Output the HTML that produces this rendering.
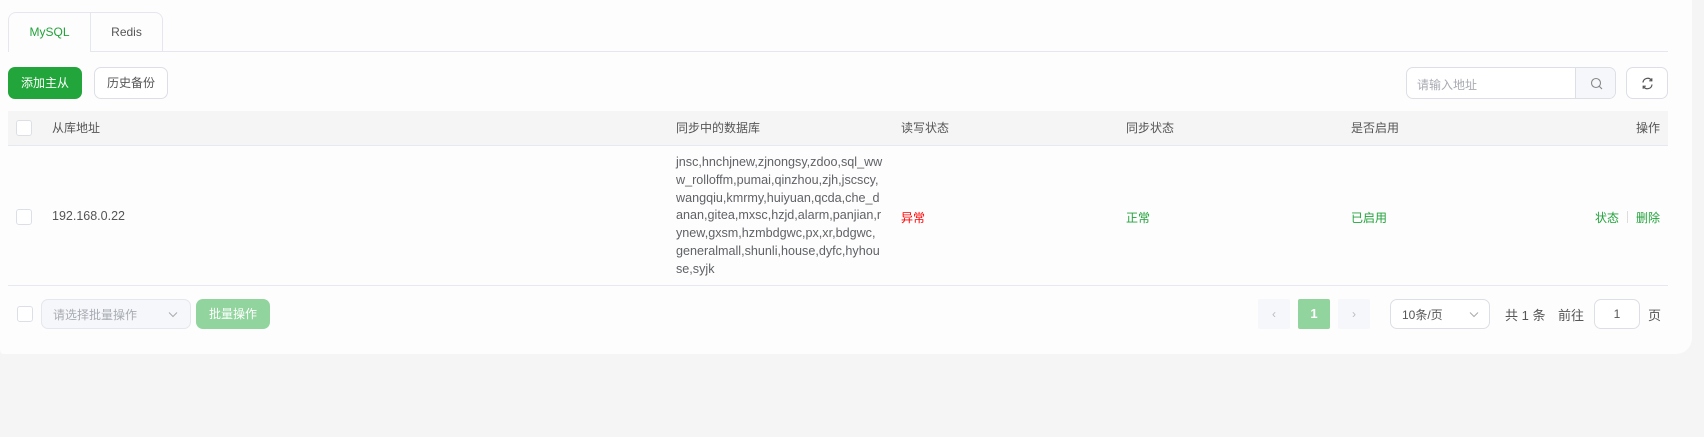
<!DOCTYPE html>
<html><head><meta charset="utf-8"><style>
*{box-sizing:border-box;margin:0;padding:0}
body{width:1704px;height:437px;background:#f5f5f6;font-family:"Liberation Sans","Noto Sans CJK SC",sans-serif;font-size:12px;color:#606266;position:relative;overflow:hidden}
.card{position:absolute;left:0;top:0;width:1692px;height:354px;background:#fdfdfd;border-bottom-right-radius:16px;border-bottom-left-radius:4px}
.a{position:absolute}
.tab{position:absolute;top:12px;height:40px;border:1px solid #e4e7ed;border-bottom:none;line-height:38px;text-align:center;font-size:12px}
.btn{position:absolute;height:32px;border-radius:7px;line-height:30px;text-align:center;font-size:12px}
.cb{position:absolute;width:16px;height:16px;border:1px solid #dcdfe6;border-radius:3px;background:#fff}
.th{position:absolute;top:111px;line-height:35px;font-size:12px;color:#555}
</style></head><body>
<div class="card">
<div class="tab" style="left:8px;width:83px;border-top-left-radius:8px;color:#22a33b">MySQL</div>
<div class="tab" style="left:90px;width:73px;border-top-right-radius:8px;color:#555">Redis</div>
<div class="a" style="left:8px;top:51px;width:1660px;height:1px;background:#e4e7ed"></div>
<div class="a" style="left:9px;top:51px;width:81px;height:1px;background:#fdfdfd"></div>

<div class="btn" style="left:8px;top:67px;width:74px;background:#22a63b;color:#fff;line-height:32px">添加主从</div>
<div class="btn" style="left:94px;top:67px;width:74px;border:1px solid #dcdfe6;background:#fff;color:#555">历史备份</div>

<div class="a" style="left:1406px;top:67px;width:210px;height:32px;border:1px solid #dcdfe6;border-radius:7px;background:#fff;overflow:hidden">
<span class="a" style="left:10px;top:8px;color:#a8abb2">请输入地址</span>
<div class="a" style="left:168px;top:0;width:42px;height:30px;background:#f5f7fa;border-left:1px solid #dcdfe6"></div>
<svg class="a" style="left:183px;top:9px" width="13" height="13" viewBox="0 0 13 13"><circle cx="6" cy="6" r="4.5" fill="none" stroke="#888" stroke-width="1.1"/><path d="M9.3 9.3L12 12" stroke="#888" stroke-width="1.1"/></svg>
</div>
<div class="a" style="left:1626px;top:67px;width:42px;height:32px;border:1px solid #dcdfe6;border-radius:7px;background:#fff">
<svg class="a" style="left:14px;top:9px" width="13" height="13" viewBox="0 0 13 13" fill="none" stroke="#555" stroke-width="1.2"><path d="M2 5.5A4.6 4.6 0 0 1 10.5 3.5"/><path d="M11 7.5A4.6 4.6 0 0 1 2.5 9.5"/><path d="M10.8 1.2V3.8H8.2"/><path d="M2.2 11.8V9.2H4.8"/></svg>
</div>

<div class="a" style="left:8px;top:111px;width:1660px;height:35px;background:#f5f5f5;border-bottom:1px solid #e6e9f0"></div>
<div class="cb" style="left:16px;top:120px"></div>
<div class="th" style="left:52px">从库地址</div>
<div class="th" style="left:676px">同步中的数据库</div>
<div class="th" style="left:901px">读写状态</div>
<div class="th" style="left:1126px">同步状态</div>
<div class="th" style="left:1351px">是否启用</div>
<div class="th" style="left:1636px">操作</div>

<div class="cb" style="left:16px;top:209px"></div>
<div class="a" style="left:52px;top:209px;font-size:12.5px;color:#555">192.168.0.22</div>
<div class="a" style="left:676px;top:154px;width:230px;font-size:12.6px;line-height:17.8px;white-space:nowrap;color:#606266">jnsc,hnchjnew,zjnongsy,zdoo,sql_ww<br>w_rolloffm,pumai,qinzhou,zjh,jscscy,<br>wangqiu,kmrmy,huiyuan,qcda,che_d<br>anan,gitea,mxsc,hzjd,alarm,panjian,r<br>ynew,gxsm,hzmbdgwc,px,xr,bdgwc,<br>generalmall,shunli,house,dyfc,hyhou<br>se,syjk</div>
<div class="a" style="left:901px;top:209px;color:#f00">异常</div>
<div class="a" style="left:1126px;top:209px;color:#22a33b">正常</div>
<div class="a" style="left:1351px;top:209px;color:#22a33b">已启用</div>
<div class="a" style="left:1595px;top:209px;color:#22a33b">状态</div>
<div class="a" style="left:1627px;top:211px;width:1px;height:12px;background:#ddd"></div>
<div class="a" style="left:1636px;top:209px;color:#22a33b">删除</div>
<div class="a" style="left:8px;top:285px;width:1660px;height:1px;background:#e6e9f0"></div>

<div class="cb" style="left:17px;top:306px"></div>
<div class="a" style="left:41px;top:299px;width:150px;height:30px;border:1px solid #e4e7ed;border-radius:7px;background:#f5f7fa">
<span class="a" style="left:11px;top:6px;color:#a8abb2">请选择批量操作</span>
<svg class="a" style="left:126px;top:11px" width="10" height="7" viewBox="0 0 10 7"><path d="M1 1.5L5 5.5L9 1.5" fill="none" stroke="#aaa" stroke-width="1"/></svg>
</div>
<div class="btn" style="left:196px;top:299px;width:74px;height:30px;line-height:30px;background:#92d49e;color:#fff">批量操作</div>

<div class="a" style="left:1258px;top:299px;width:32px;height:30px;background:#f5f7fa;border-radius:2px;text-align:center;line-height:30px;color:#bbb">‹</div>
<div class="a" style="left:1298px;top:299px;width:32px;height:30px;background:#92d49e;border-radius:2px;text-align:center;line-height:30px;color:#fff;font-weight:bold;font-size:13px">1</div>
<div class="a" style="left:1338px;top:299px;width:32px;height:30px;background:#f5f7fa;border-radius:2px;text-align:center;line-height:30px;color:#bbb">›</div>
<div class="a" style="left:1390px;top:299px;width:100px;height:30px;border:1px solid #dcdfe6;border-radius:7px;background:#fff">
<span class="a" style="left:11px;top:6px;color:#555">10条/页</span>
<svg class="a" style="left:78px;top:11px" width="10" height="7" viewBox="0 0 10 7"><path d="M1 1.5L5 5.5L9 1.5" fill="none" stroke="#aaa" stroke-width="1"/></svg>
</div>
<div class="a" style="left:1505px;top:305px;font-size:13px;color:#555">共 1 条</div>
<div class="a" style="left:1558px;top:305px;font-size:13px;color:#555">前往</div>
<div class="a" style="left:1594px;top:299px;width:46px;height:30px;border:1px solid #dcdfe6;border-radius:7px;background:#fff;text-align:center;line-height:28px;color:#555">1</div>
<div class="a" style="left:1648px;top:305px;font-size:13px;color:#555">页</div>
</div>
</body></html>
